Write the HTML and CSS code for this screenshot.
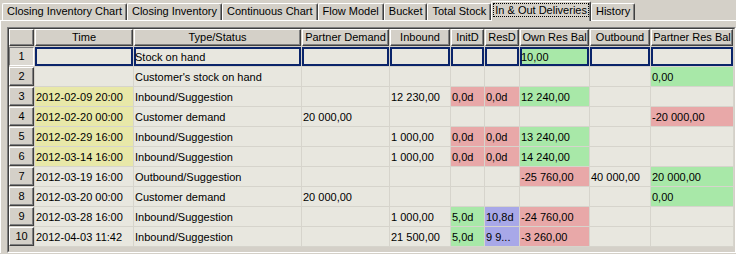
FILE: index.html
```html
<!DOCTYPE html>
<html>
<head>
  <title>In &amp; Out Deliveries</title>
  <link rel="stylesheet" href="styles.css">
</head>
<body>

  <div class="tabs">
    <div class="tab">Closing Inventory Chart</div>
    <div class="tab">Closing Inventory</div>
    <div class="tab">Continuous Chart</div>
    <div class="tab">Flow Model</div>
    <div class="tab">Bucket</div>
    <div class="tab">Total Stock</div>
    <div class="tab active"><span class="focus">In &amp; Out Deliveries</span></div>
    <div class="tab">History</div>
  </div>

  <div class="panel">
    <div class="frame">
      <div class="frame-inner">
        <table class="grid">
          <thead>
            <tr>
              <th class="w-row"><div class="btn"></div></th>
              <th class="w-time"><div class="btn">Time</div></th>
              <th class="w-type"><div class="btn">Type/Status</div></th>
              <th class="w-pd"><div class="btn">Partner Demand</div></th>
              <th class="w-in"><div class="btn">Inbound</div></th>
              <th class="w-initd"><div class="btn">InitD</div></th>
              <th class="w-resd"><div class="btn">ResD</div></th>
              <th class="w-own"><div class="btn">Own Res Bal</div></th>
              <th class="w-out"><div class="btn">Outbound</div></th>
              <th class="w-prb"><div class="btn">Partner Res Bal</div></th>
            </tr>
          </thead>
          <tbody id="rows">
            <!-- rows are filled in by the script below -->
          </tbody>
        </table>
      </div>
    </div>
  </div>

  <script>
    // each cell: [text, colour]   y = yellow, g = green, r = red, b = blue
    const rows = [
      [['',''], ['Stock on hand',''], ['',''], ['',''], ['',''], ['',''], ['10,00','g'], ['',''], ['','']],
      [['',''], ["Customer's stock on hand",''], ['',''], ['',''], ['',''], ['',''], ['',''], ['',''], ['0,00','g']],
      [['2012-02-09 20:00','y'], ['Inbound/Suggestion',''], ['',''], ['12 230,00',''], ['0,0d','r'], ['0,0d','r'], ['12 240,00','g'], ['',''], ['','']],
      [['2012-02-20 00:00','y'], ['Customer demand',''], ['20 000,00',''], ['',''], ['',''], ['',''], ['',''], ['',''], ['-20 000,00','r']],
      [['2012-02-29 16:00','y'], ['Inbound/Suggestion',''], ['',''], ['1 000,00',''], ['0,0d','r'], ['0,0d','r'], ['13 240,00','g'], ['',''], ['','']],
      [['2012-03-14 16:00','y'], ['Inbound/Suggestion',''], ['',''], ['1 000,00',''], ['0,0d','r'], ['0,0d','r'], ['14 240,00','g'], ['',''], ['','']],
      [['2012-03-19 16:00',''], ['Outbound/Suggestion',''], ['',''], ['',''], ['',''], ['',''], ['-25 760,00','r'], ['40 000,00',''], ['20 000,00','g']],
      [['2012-03-20 00:00',''], ['Customer demand',''], ['20 000,00',''], ['',''], ['',''], ['',''], ['',''], ['',''], ['0,00','g']],
      [['2012-03-28 16:00',''], ['Inbound/Suggestion',''], ['',''], ['1 000,00',''], ['5,0d','g'], ['10,8d','b'], ['-24 760,00','r'], ['',''], ['','']],
      [['2012-04-03 11:42',''], ['Inbound/Suggestion',''], ['',''], ['21 500,00',''], ['5,0d','g'], ['9 9...','b'], ['-3 260,00','r'], ['',''], ['','']]
    ];

    function renderRows() {
      const body = document.getElementById('rows');
      rows.forEach((row, i) => {
        const tr = document.createElement('tr');
        if (i === 0) tr.classList.add('selected');

        const head = document.createElement('td');
        head.className = 'row-head';
        head.innerHTML = `<div class="btn">${i + 1}</div>`;
        tr.appendChild(head);

        for (let [text, colour] of row) {
          const td = document.createElement('td');
          if (colour) td.classList.add('c-' + colour);
          td.textContent = text;
          tr.appendChild(td);
        }
        body.appendChild(tr);
      });
    }

    renderRows();
  </script>

</body>
</html>
```

FILE: styles.css
```css
body {
  margin: 0;
  background: #d4d0c8;
  font-family: 'Liberation Sans', Arial, sans-serif;
  font-size: 11px;
  color: #000;
  overflow: hidden;
}

/* tab strip */
.tabs {
  display: flex;
  align-items: flex-end;
  height: 20px;
  padding-left: 2px;
}
.tab {
  height: 17px;
  box-sizing: border-box;
  padding: 0 4px;
  line-height: 15px;
  border-top: 1px solid #fff;
  border-left: 1px solid #fff;
  border-right: 1px solid #404040;
  box-shadow: inset -1px 0 #808080;
  border-radius: 2px 2px 0 0;
  white-space: nowrap;
}
.tab.active {
  position: relative;
  z-index: 1;
  height: 20px;
  margin-bottom: -1px;
  padding: 0 2px;
  line-height: 16px;
  background: #d4d0c8;
}
.focus {
  outline: 1px dotted #000;
  padding: 0 1px;
}

/* panel */
.panel {
  border-top: 1px solid #fff;
  border-left: 1px solid #fff;
  padding: 6px 0 0 6px;
}
.frame {
  border: 1px solid;
  border-color: #808080 #fff #fff #808080;
}
.frame-inner {
  border: 1px solid;
  border-color: #404040 #d4d0c8 #d4d0c8 #404040;
  height: 222px;
  overflow: hidden;
  background: #d4d0c8;
}

/* grid */
.grid {
  table-layout: fixed;
  width: 725px;
  border-collapse: separate;
  border-spacing: 0;
}
.grid th,
.grid td {
  box-sizing: border-box;
  padding: 0;
  white-space: nowrap;
  overflow: hidden;
}
.grid th {
  height: 18px;
  padding: 0 1px 1px 0;
  font-weight: normal;
}
.w-row { width: 26px; }
.w-time { width: 99px; }
.w-type { width: 168px; }
.w-pd { width: 88px; }
.w-in { width: 61px; }
.w-initd { width: 34px; }
.w-resd { width: 35px; }
.w-own { width: 70px; }
.w-out { width: 61px; }
.w-prb { width: 83px; }

.btn {
  box-sizing: border-box;
  height: 17px;
  border: 1px solid;
  border-color: #fff #404040 #404040 #fff;
  box-shadow: inset -1px -1px #808080;
  line-height: 15px;
  text-align: center;
}

.grid td {
  height: 20px;
  padding-left: 1px;
  background: #e8e7df;
  border-right: 1px solid #d6d4cc;
  border-bottom: 1px solid #d6d4cc;
}
.grid td.row-head {
  padding: 0 1px 1px 0;
  background: #d4d0c8;
  border: none;
}
.row-head .btn {
  height: 19px;
  line-height: 17px;
}

.selected td {
  box-shadow: inset 0 0 0 2px #0a246a;
}
.selected td.row-head {
  box-shadow: none;
}
.selected .row-head .btn {
  border-color: #808080 #fff #fff #808080;
  box-shadow: none;
  background: #dcd9d2;
}

.c-y { background: #e8e8a8 !important; }
.c-g { background: #a8e8a8 !important; }
.c-r { background: #e8a8a8 !important; }
.c-b { background: #a8a8e8 !important; }
```
